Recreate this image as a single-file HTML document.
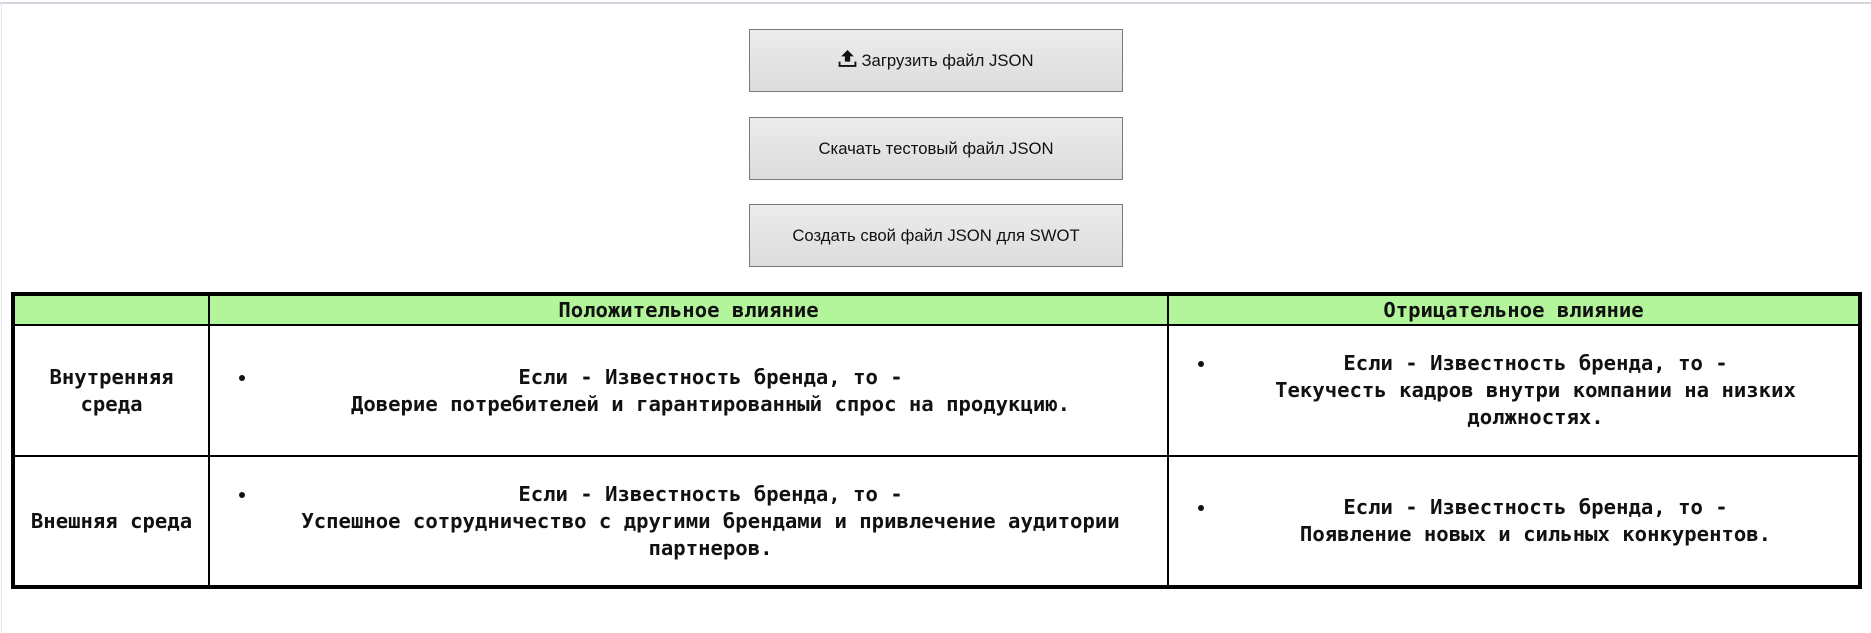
<!DOCTYPE html>
<html><head><meta charset="utf-8"><style>
html,body{margin:0;padding:0;background:#fff;width:1871px;height:633px;overflow:hidden;position:relative}
.topline{position:absolute;left:0;top:2px;width:1871px;height:2px;background:#d3d6dc}
.leftline{position:absolute;left:1px;top:2px;width:1px;height:631px;background:#e3e6ea}
.btn{position:absolute;left:749px;width:372px;height:61px;border:1px solid #7a7a7a;background:linear-gradient(#ececec,#dcdcdc);font-family:"Liberation Sans",sans-serif;font-size:16.7px;color:#111;display:flex;align-items:center;justify-content:center}
.btn svg{margin-right:4px;margin-top:-5px}
table{position:absolute;left:11px;top:292px;width:1851px;height:296px;border-collapse:collapse;table-layout:fixed;border:4px solid #000;font-family:"DejaVu Sans Mono","Liberation Mono",monospace;font-weight:bold;font-size:20.6px;color:#111}
td,th{border:2px solid #000;text-align:center;vertical-align:middle;padding:0 4px;line-height:27px}
th{background:#b3f59b;height:28px;font-size:20.6px;padding:0}
ul{margin:0;padding:0 0 0 44px}
li{text-align:center}
</style></head><body>
<div class="topline"></div><div class="leftline"></div>
<div class="btn" style="top:29px"><svg width="19" height="19" viewBox="0 0 18 18"><path d="M9 1 L15 7 H11.5 V12 H6.5 V7 H3 Z" fill="#111"/><path d="M1.5 12 V16 H16.5 V12" fill="none" stroke="#111" stroke-width="1.8"/></svg>Загрузить файл JSON</div>
<div class="btn" style="top:117px">Скачать тестовый файл JSON</div>
<div class="btn" style="top:204px">Создать свой файл JSON для SWOT</div>
<table>
<colgroup><col style="width:196px"><col style="width:959px"><col></colgroup>
<tr><th></th><th>Положительное влияние</th><th>Отрицательное влияние</th></tr>
<tr style="height:131px"><td>Внутренняя среда</td><td><ul><li>Если - Известность бренда, то -<br>Доверие потребителей и гарантированный спрос на продукцию.</li></ul></td><td><ul><li>Если - Известность бренда, то -<br>Текучесть кадров внутри компании на низких должностях.</li></ul></td></tr>
<tr style="height:131px"><td>Внешняя среда</td><td><ul><li>Если - Известность бренда, то -<br>Успешное сотрудничество с другими брендами и привлечение аудитории партнеров.</li></ul></td><td><ul><li>Если - Известность бренда, то -<br>Появление новых и сильных конкурентов.</li></ul></td></tr>
</table>
</body></html>
